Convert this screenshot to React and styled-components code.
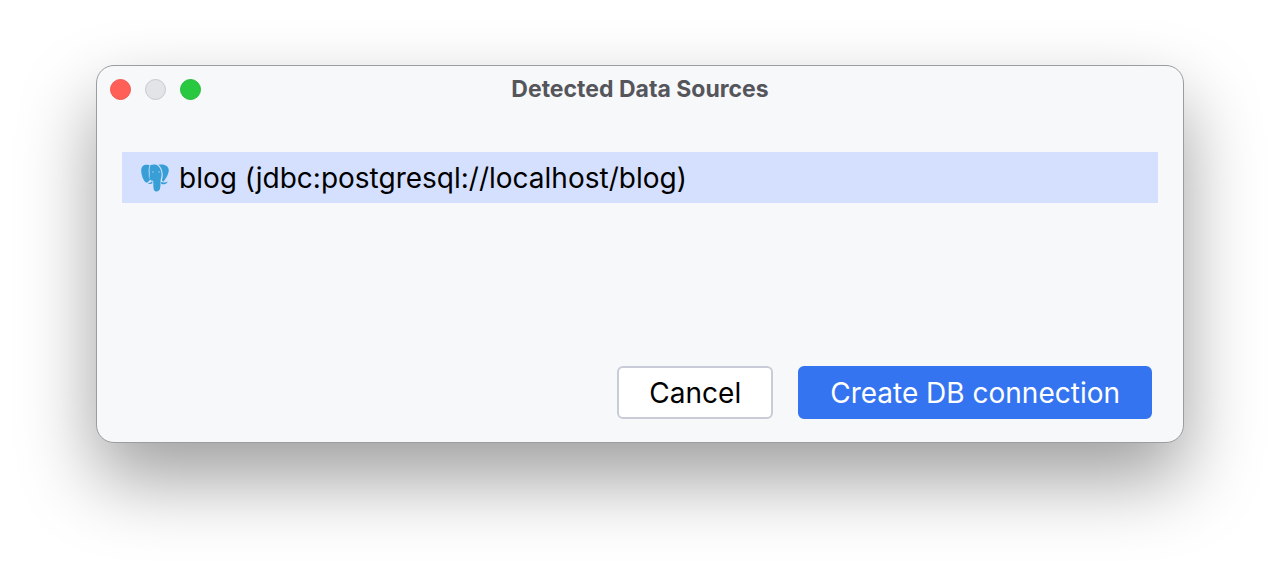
import React from "react";
import styled, { createGlobalStyle } from "styled-components";

const GlobalStyle = createGlobalStyle`
  * { box-sizing: border-box; }
  body {
    margin: 0;
    background: #ffffff;
    font-family: Inter, "Liberation Sans", sans-serif;
  }
`;

const Desktop = styled.main`
  min-height: 100vh;
  padding: 65px 96px 127px;
  overflow: hidden;
`;

const Dialog = styled.section`
  border: 1px solid #9b9da1;
  border-radius: 18px;
  background: #f7f8fa;
  box-shadow: 0 36px 76px rgba(0, 0, 0, 0.38);
`;

const TitleBar = styled.header`
  display: grid;
  grid-template-columns: 1fr auto 1fr;
  align-items: center;
  height: 46px;
  padding: 0 13px;
`;

const WindowControls = styled.div`
  display: flex;
  gap: 14px;
`;

const WindowButton = styled.button`
  width: 21px;
  height: 21px;
  padding: 0;
  border: 1px solid ${(p) => p.$edge};
  border-radius: 50%;
  background: ${(p) => p.$fill};
`;

const Title = styled.h1`
  margin: 0;
  color: #55565c;
  font-size: 23px;
  font-weight: 700;
  line-height: 28px;
`;

const SourceList = styled.ul`
  min-height: 214px;
  margin: 0;
  padding: 40px 25px 0;
  list-style: none;
`;

const SourceItem = styled.li`
  display: flex;
  align-items: center;
  gap: 10px;
  height: 51px;
  padding: 0 19px;
  background: #d5e0ff;
  color: #000000;
  font-size: 28px;
  line-height: 36px;
`;

const Actions = styled.footer`
  display: flex;
  justify-content: flex-end;
  gap: 25px;
  padding: 40px 31px 23px;
`;

const Button = styled.button`
  height: 53px;
  padding: 0 30px;
  border: 2px solid ${(p) => (p.$primary ? "#3574f0" : "#c9ccd6")};
  border-radius: 6px;
  background: ${(p) => (p.$primary ? "#3574f0" : "#ffffff")};
  color: ${(p) => (p.$primary ? "#ffffff" : "#000000")};
  font-family: inherit;
  font-size: 28px;
  line-height: 36px;
`;

const PostgresIcon = () => (
  <svg width="28" height="28" viewBox="0 0 28 28" aria-hidden="true">
    <g fill="#389fd6">
      <path d="M8.600 1.200C4.200 0 .2 1.200 .2 6.600c0 4.900 2.900 12.100 5.600 12.100 1.300 0 2.200-1.600 3.400-3.100-1.300-1.500-1.600-3.200-1.300-5.400C7.600 6.500 7.400 3.800 8.600 1.200Z" />
      <path d="M9.500 1.100C12.500.1 15.200.4 17.200 1.900c2.200 2.300 3.300 5 3.300 8.100.2 2.500-.6 4.300-.9 6.300-.2 2.600.2 5.600-.7 8.800-.8 2.800-5.200 3.300-6.100.3-.7-2.500-.3-5.900-.6-8.600-1.200.3-2.500-.4-3.200-1.500-.9-1.600-.4-3.700-.3-5.400-.3-3.100-.3-6.300.8-8.800Z" />
      <path d="M17.500.8c3.700-1.100 9.500-.2 10.200 4.600.5 3.200-2.200 8.900-5.400 12.300-.8-.6-1.400-1.200-1.300-2 .5-1.500.8-3.500.7-5.500C21.400 6.300 20 2.800 17.500.8Z" />
      <path d="M20.200 17.800c2 .9 4.400.9 6.600-.4-1 2.500-4.200 3.500-6.700 2.500ZM11.400 17.300v1.900c-1.400.9-3.500.9-4.700.1 1.800 0 2.900-.8 4.700-2Z" />
    </g>
    <path fill="#d5e0ff" d="m10.800 7.500 2.100.3-.8 1ZM17 7.800l2-.4-.8 1.300Z" />
  </svg>
);

export default function App() {
  return (
    <>
      <GlobalStyle />
      <Desktop>
        <Dialog role="dialog" aria-labelledby="dialog-title">
          <TitleBar>
            <WindowControls>
              <WindowButton type="button" aria-label="Close" $fill="#ff5f57" $edge="#f0564f" />
              <WindowButton type="button" aria-label="Minimize" disabled $fill="#e2e4e8" $edge="#c7c9d2" />
              <WindowButton type="button" aria-label="Zoom" $fill="#28c840" $edge="#27ba3c" />
            </WindowControls>
            <Title id="dialog-title">Detected Data Sources</Title>
          </TitleBar>
          <SourceList>
            <SourceItem>
              <PostgresIcon />
              <span>blog (jdbc:postgresql://localhost/blog)</span>
            </SourceItem>
          </SourceList>
          <Actions>
            <Button type="button">Cancel</Button>
            <Button type="button" $primary>Create DB connection</Button>
          </Actions>
        </Dialog>
      </Desktop>
    </>
  );
}
